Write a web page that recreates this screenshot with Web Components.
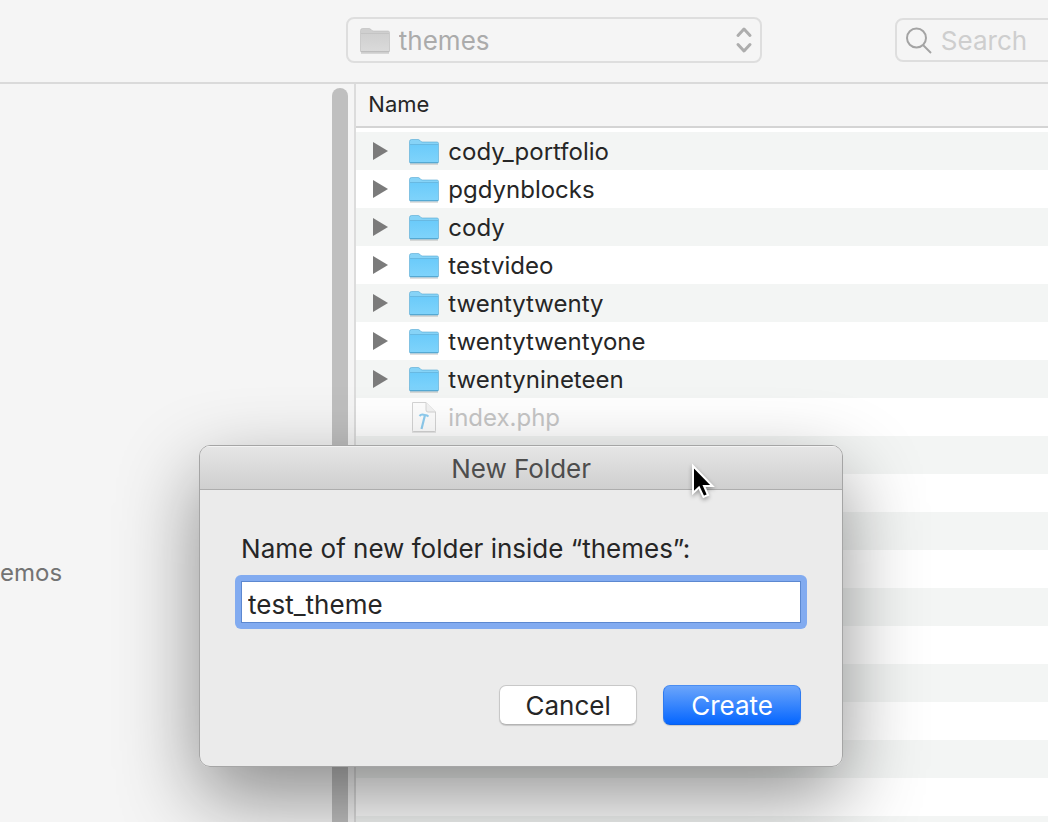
<!DOCTYPE html>
<html lang="en">
<head>
<meta charset="utf-8">
<title>New Folder</title>
<style>
  html, body { height: 100%; margin: 0; }
  body { overflow: hidden; background: #f5f5f5; color: #262626; font: 24px/30px Inter, "Liberation Sans", sans-serif; }
</style>
</head>
<body>
<finder-window>
  <finder-toolbar slot="toolbar"></finder-toolbar>
  <finder-sidebar slot="sidebar"><a href="#emos">emos</a></finder-sidebar>
  <file-list slot="files"></file-list>
</finder-window>
<name-dialog heading="New Folder" value="test_theme">Name of new folder inside “themes”:</name-dialog>
<mouse-pointer></mouse-pointer>

<script>
const define = (name, html, setup) => customElements.define(name, class extends HTMLElement {
  constructor() {
    super();
    this.attachShadow({ mode: 'open' }).innerHTML = html;
  }
  connectedCallback() { if (setup) setup(this, this.shadowRoot); }
});

define('folder-icon', `
<style>
  :host { display: block; width: 32px; height: 28px; --top: #86d3f7; --from: #6bcbfa; --to: #7fd3fb; --edge: #55a9d3; }
  :host([muted]) { --top: #cfcfcf; --from: #d0d0d0; --to: #dadada; --edge: #bdbdbd; }
  svg { display: block; }
  .back { fill: var(--top); stroke: var(--edge); stroke-opacity: .6; }
  .a { stop-color: var(--from); } .b { stop-color: var(--to); }
  .line { stroke: var(--edge); fill: none; }
</style>
<svg width="32" height="28" viewBox="0 0 32 28" aria-hidden="true">
  <defs><linearGradient id="g" x1="0" y1="0" x2="0" y2="1"><stop class="a" offset="0"/><stop class="b" offset="1"/></linearGradient></defs>
  <path d="M2 26h28" stroke="#000" stroke-opacity=".12" stroke-width="2"/>
  <path class="back" d="M1.500 24V3.500q0-2 2-2h6.500q1 0 1.800.8l1 1q.8.7 1.800.7H29q1.500 0 1.500 1.500V24q0 1-1 1h-27q-1 0-1-1z"/>
  <path fill="url(#g)" d="M2 7h28v17q0 .5-.5.5h-27q-.5 0-.5-.5z"/>
  <path class="line" d="M2 6.500h28" stroke-opacity=".6"/>
  <path class="line" d="M2 24.500h28"/>
</svg>`);

define('script-file-icon', `
<style>:host { display: block; width: 32px; height: 32px; } svg { display: block; }</style>
<svg width="32" height="32" viewBox="0 0 32 32" aria-hidden="true">
  <path d="M4.500 1.500h13.500l9.500 9.500v18.500q0 1-1 1h-21q-1 0-1-1z" fill="#fdfdfd" stroke="#d4d4d4"/>
  <path d="M18 1.500v7.500q0 2 2 2h7.500" fill="#f2f2f2" stroke="#d4d4d4"/>
  <path d="M4 31h24" stroke="#d0d0d0"/>
  <path d="M17 14L13.500 28" stroke="#8fcdf0" stroke-width="2.200" fill="none"/>
  <path d="M11.500 15q1.500-1.800 4-1.300l3.500.7 1.500 1.100" stroke="#8fcdf0" stroke-width="2" fill="none"/>
</svg>`);

define('finder-toolbar', `
<style>
  :host { display: flex; align-items: center; height: 80px; padding-bottom: 2px; border-bottom: 2px solid #dadada; background: #f5f5f5; overflow: hidden; font-size: 26px; }
  .place { position: relative; flex: none; width: clamp(200px, 40%, 416px); margin-left: 33%; }
  .place folder-icon { position: absolute; left: 13px; top: 10px; pointer-events: none; }
  .place svg { position: absolute; right: 8px; top: 8px; pointer-events: none; }
  select { appearance: none; display: block; box-sizing: border-box; width: 100%; height: 46px; margin: 0; padding: 2px 40px 0 51px; border: 2px solid #dedede; border-radius: 8px; background: #f5f5f5; color: #ababab; font: inherit; opacity: 1; }
  .search { flex: 0 0 160px; display: flex; align-items: center; gap: 8px; box-sizing: border-box; height: 44px; margin-left: 133px; padding-left: 8px; border: 2px solid #dedede; border-radius: 8px; }
  .search svg { flex: none; }
  input { flex: 1; min-width: 0; padding: 2px 0 0; border: 0; background: none; font: inherit; color: #555; outline: 0; }
  input::placeholder { color: #cecece; opacity: 1; }
</style>
<div class="place">
  <select aria-label="Location" disabled><option>themes</option></select>
  <folder-icon muted></folder-icon>
  <svg width="20" height="30" viewBox="0 0 20 30" fill="none" stroke="#adadad" stroke-width="3" stroke-linecap="round" stroke-linejoin="round" aria-hidden="true"><path d="M4 10.500l6-6.500 6 6.500M4 19.500l6 6.500 6-6.500"/></svg>
</div>
<label class="search">
  <svg width="28" height="28" viewBox="0 0 28 28" fill="none" stroke="#a4a4a4" stroke-width="2" aria-hidden="true"><circle cx="11.500" cy="12" r="9.500"/><path d="M18 19l8 8"/></svg>
  <input type="search" placeholder="Search" aria-label="Search">
</label>`);

define('finder-sidebar', `
<style>
  :host { display: flex; justify-content: space-between; background: #f5f5f5; border-right: 2px solid #dcdcdc; overflow: hidden; }
  nav { padding-top: 474px; }
  ::slotted(a) { color: #737373; text-decoration: none; }
  .track { width: 16px; margin: 4px 6px 0 0; border-radius: 8px 8px 0 0; background: #bfbfbf; }
</style>
<nav aria-label="Favorites"><slot></slot></nav>
<div class="track"></div>`);

define('file-list', `
<style>
  :host { display: flex; flex-direction: column; overflow: hidden; background: #fff; }
  table { width: 100%; border-collapse: collapse; }
  th { height: 40px; padding: 0 12px 2px; border-bottom: 2px solid #d4d4d4; background: #f5f5f5; text-align: left; font-size: 22px; font-weight: 400; }
  tbody::before { content: ""; display: block; height: 4px; }
  td { height: 38px; padding: 0 0 0 16px; }
  tbody tr:nth-child(odd) { background: #f3f5f4; }
  .cell { display: flex; align-items: center; padding-top: 2px; }
  button { display: flex; width: 16px; height: 20px; margin: 0 20px 2px 0; padding: 0; border: 0; background: none; }
  script-file-icon { margin-bottom: 2px; }
  .name { margin-left: 8px; }
  .blank { width: 36px; }
  .off { color: #c6c6c6; }
  .rest { flex: 1; background: repeating-linear-gradient(#f3f5f4 0 38px, #fff 38px 76px); }
</style>
<table>
  <thead><tr><th scope="col">Name</th></tr></thead>
  <tbody></tbody>
</table>
<div class="rest"></div>`, (host, root) => {
  const folders = ['cody_portfolio', 'pgdynblocks', 'cody', 'testvideo', 'twentytwenty', 'twentytwentyone', 'twentynineteen'];
  root.querySelector('tbody').innerHTML = folders.map(name => `
    <tr><td><div class="cell">
      <button aria-label="Expand ${name}"><svg width="16" height="20" viewBox="0 0 16 20"><path d="M1 1v18l15-9z" fill="#7b7b7b"/></svg></button>
      <folder-icon></folder-icon><span class="name">${name}</span>
    </div></td></tr>`).join('') + `
    <tr><td><div class="cell off">
      <span class="blank"></span><script-file-icon></script-file-icon><span class="name">index.php</span>
    </div></td></tr>`;
});

define('finder-window', `
<style>
  :host { display: grid; grid-template: auto minmax(0, 1fr) / 34% minmax(0, 1fr); height: 100vh; }
  .bar { grid-column: 1 / -1; min-width: 0; overflow: hidden; }
  ::slotted([slot="sidebar"]), ::slotted([slot="files"]) { min-height: 0; }
</style>
<div class="bar"><slot name="toolbar"></slot></div>
<slot name="sidebar"></slot>
<slot name="files"></slot>`);

define('push-button', `
<style>
  :host { display: block; width: 138px; }
  button { display: block; box-sizing: border-box; width: 100%; height: 40px; padding: 2px 0 0; border: 1px solid #c8c8c8; border-bottom-color: #b4b4b4; border-radius: 7px; background: #fff; box-shadow: 0 1px 1px rgba(0,0,0,.15); color: #262626; font: inherit; }
  :host([primary]) button { border-color: #4a8df2 #2f7bf0 #0a5fe8; background: linear-gradient(#6ba5fb, #0566ff); color: #fff; }
</style>
<button type="button"><slot></slot></button>`);

define('name-dialog', `
<style>
  :host { position: absolute; left: 19%; top: 445px; width: min(644px, 80%); border-radius: 11px; box-shadow: 0 30px 80px rgba(0,0,0,.44); font-size: 26px; }
  section { border: 1px solid #a5a5a5; border-radius: 11px; background: #ebebeb; overflow: hidden; box-sizing: border-box; }
  h1 { margin: 0; height: 43px; line-height: 46px; text-align: center; font-size: 26px; font-weight: 400; color: #4d4d4d; border-bottom: 1px solid #adadad; background: linear-gradient(#e6e6e6, #cfcfcf); box-shadow: inset 0 1px #f3f3f3; }
  form { display: flex; flex-direction: column; padding: 44px 41px 41px; }
  .field { margin: 11px -6px 0; padding: 6px; border-radius: 6px; background: #82abf0; }
  input { display: block; box-sizing: border-box; width: 100%; height: 42px; margin: 0; padding: 4px 6px 0; border: 1px solid #5c88d0; border-radius: 0; background: #fff; color: #262626; font: inherit; outline: 0; }
  .actions { display: flex; justify-content: flex-end; gap: 26px; margin-top: 56px; }
</style>
<section role="dialog" aria-labelledby="title">
  <h1 id="title"></h1>
  <form>
    <label for="name"><slot></slot></label>
    <div class="field"><input id="name" type="text" spellcheck="false"></div>
    <div class="actions">
      <push-button>Cancel</push-button>
      <push-button primary>Create</push-button>
    </div>
  </form>
</section>`, (host, root) => {
  root.querySelector('h1').textContent = host.getAttribute('heading');
  root.querySelector('input').value = host.getAttribute('value');
});

define('mouse-pointer', `
<style>:host { position: absolute; left: 688px; top: 460px; pointer-events: none; } svg { display: block; filter: drop-shadow(0 2px 2px rgba(0,0,0,.35)); }</style>
<svg width="28" height="42" viewBox="0 0 28 42" aria-hidden="true">
  <path d="M5 6v27l6-5.500 4.500 9.500 4.500-2-4-9h8.500z" fill="#000" stroke="#fff" stroke-width="2"/>
</svg>`);
</script>
</body>
</html>
